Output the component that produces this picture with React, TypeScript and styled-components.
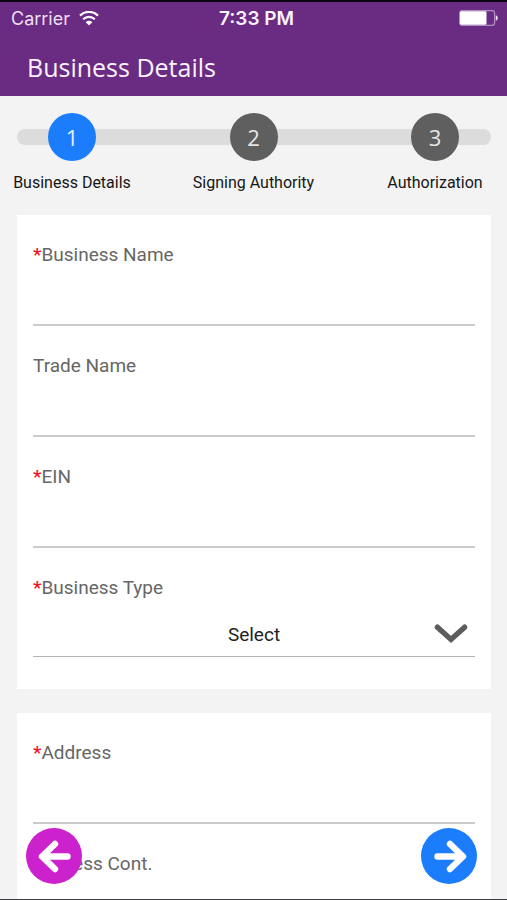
import React from "react";
import styled, { createGlobalStyle } from "styled-components";

const GlobalStyle = createGlobalStyle`
  *, *::before, *::after { box-sizing: border-box; }
  body {
    margin: 0;
    background: #f3f3f3;
    font-family: Roboto, "Liberation Sans", sans-serif;
  }
`;

const Screen = styled.div`
  position: relative;
  display: flex;
  flex-direction: column;
  height: 100vh;
  overflow: hidden;
  background: #f3f3f3;
  border-bottom: 1px solid #3c3c3e;
`;

const Header = styled.header`
  flex: none;
  background: #692c82;
  border-top: 2px solid #0b0410;
  color: #fbf2ff;
`;

const StatusBar = styled.div`
  display: grid;
  grid-template-columns: 1fr auto 1fr;
  align-items: center;
  height: 32px;
  padding: 0 9px 0 11px;
  font-family: Inter, "Liberation Sans", sans-serif;
  font-size: 18px;
`;

const Carrier = styled.span`
  display: flex;
  align-items: center;
  gap: 9px;
  color: #eedff5;
`;

const Clock = styled.time`
  padding-left: 4px;
  font-size: 19px;
  font-weight: 600;
`;

const Battery = styled.svg`
  justify-self: end;
`;

const Title = styled.h1`
  margin: 0;
  padding: 17px 27px 13px;
  font-family: "Open Sans", "Noto Sans", sans-serif;
  font-size: 25px;
  font-weight: 400;
  line-height: 32px;
`;

const Content = styled.main`
  flex: 1;
  min-height: 0;
  overflow-y: auto;
  scrollbar-width: none;
`;

const Stepper = styled.ol`
  position: relative;
  display: flex;
  justify-content: space-between;
  margin: 0;
  padding: 17px 10px 20px;
  list-style: none;

  &::before {
    content: "";
    position: absolute;
    top: 33px;
    left: 17px;
    right: 16px;
    height: 16px;
    border-radius: 8px;
    background: #dcdcdc;
  }
`;

const Step = styled.li`
  position: relative;
  display: flex;
  flex-direction: column;
  align-items: center;
  gap: 10px;
  width: 124px;
  color: #171717;
  font-size: 16px;
  line-height: 24px;
  white-space: nowrap;
`;

const StepNumber = styled.span<{ $active: boolean }>`
  display: grid;
  place-items: center;
  width: 48px;
  height: 48px;
  border-radius: 50%;
  background: ${(p) => (p.$active ? "#1b7dfb" : "#5f5f5f")};
  color: ${(p) => (p.$active ? "#e4f1ff" : "#e6e6e6")};
  font-family: "Open Sans", "Noto Sans", sans-serif;
  font-size: 22px;
`;

const Form = styled.form`
  display: grid;
  gap: 24px;
  padding: 0 16px 80px 17px;
`;

const Card = styled.section`
  display: grid;
  gap: 28px;
  padding: 28px 16px 32px;
  background: #fff;
`;

const Field = styled.div<{ $thin?: boolean }>`
  display: flex;
  flex-direction: column;
  border-bottom: ${(p) => (p.$thin ? "1px solid #b4b4b4" : "2px solid #cbcbcb")};
`;

const Label = styled.label`
  color: #666;
  font-size: 19px;
  line-height: 24px;
`;

const Required = styled.span`
  color: #f5111d;
  font-weight: 500;
`;

const TextInput = styled.input`
  width: 100%;
  height: 57px;
  padding: 12px 0 0;
  border: 0;
  outline: 0;
  background: transparent;
  color: #222;
  font: inherit;
  font-size: 19px;
`;

const SelectBox = styled.div`
  display: grid;
  align-items: center;

  & > * {
    grid-area: 1 / 1;
  }
`;

const Select = styled.select`
  appearance: none;
  width: 100%;
  height: 56px;
  padding: 12px 0 0;
  border: 0;
  outline: 0;
  background: transparent;
  color: #222;
  font: inherit;
  font-size: 19px;
  text-align: center;
  text-align-last: center;
`;

const Chevron = styled.svg`
  justify-self: end;
  margin: 12px 7px 0 0;
  pointer-events: none;
`;

const RoundButton = styled.button<{ $side: "left" | "right" }>`
  position: absolute;
  bottom: 15px;
  ${(p) => (p.$side === "left" ? "left: 26px;" : "right: 30px;")}
  display: grid;
  place-items: center;
  width: 56px;
  height: 56px;
  padding: 0;
  border: 0;
  border-radius: 50%;
  background: ${(p) => (p.$side === "left" ? "#cb22cd" : "#1b7dfb")};
  cursor: pointer;
`;

const steps = ["Business Details", "Signing Authority", "Authorization"];

type TextFieldProps = { id: string; label: string; required?: boolean };

function TextField({ id, label, required = false }: TextFieldProps) {
  return (
    <Field>
      <Label htmlFor={id}>
        {required && <Required>*</Required>}
        {label}
      </Label>
      <TextInput id={id} name={id} type="text" required={required} />
    </Field>
  );
}

function WifiIcon() {
  return (
    <svg width="20" height="15" viewBox="0 0 20 15" fill="none" stroke="#fff" strokeWidth="2.2" aria-hidden="true">
      <path d="M1 4.600a12.800 12.800 0 0 1 18 0" />
      <path d="M4.200 8.200a8.200 8.200 0 0 1 11.600 0" />
      <path d="M10 14.600 6.700 11.200a4.700 4.700 0 0 1 6.600 0z" fill="#fff" stroke="none" />
    </svg>
  );
}

function BatteryIcon() {
  return (
    <Battery width="39" height="16" viewBox="0 0 39 16" aria-hidden="true">
      <rect x="0.6" y="0.6" width="35" height="14.8" rx="2.6" fill="none" stroke="#b28fc2" strokeWidth="1.2" />
      <rect x="1" y="1.2" width="26.5" height="13.6" rx="1.4" fill="#fff" />
      <path d="M36.8 5.200c1.600.6 2 1.600 2 2.800s-.4 2.200-2 2.800z" fill="#f2e6f7" />
    </Battery>
  );
}

function ArrowIcon({ back = false }: { back?: boolean }) {
  return (
    <svg width="56" height="56" viewBox="0 0 56 56" fill="none" stroke="#fff" strokeWidth="6.4" strokeLinecap="round" strokeLinejoin="round" aria-hidden="true">
      {back ? (
        <>
          <path d="M41.500 28.500H18M29 16 16 28.500 29 41" />
          <path d="M24 23 18 28.500 24 34z" fill="#fff" stroke="none" />
        </>
      ) : (
        <>
          <path d="M16.500 28.500H40M29 16 42 28.500 29 41" />
          <path d="M34 23 40 28.500 34 34z" fill="#fff" stroke="none" />
        </>
      )}
    </svg>
  );
}

export default function App() {
  return (
    <>
      <GlobalStyle />
      <Screen>
        <Header>
          <StatusBar>
            <Carrier>
              Carrier
              <WifiIcon />
            </Carrier>
            <Clock>7:33 PM</Clock>
            <BatteryIcon />
          </StatusBar>
          <Title>Business Details</Title>
        </Header>
        <Content>
          <Stepper>
            {steps.map((name, i) => (
              <Step key={name} aria-current={i === 0 ? "step" : undefined}>
                <StepNumber $active={i === 0}>{i + 1}</StepNumber>
                {name}
              </Step>
            ))}
          </Stepper>
          <Form id="business-form">
            <Card>
              <TextField id="businessName" label="Business Name" required />
              <TextField id="tradeName" label="Trade Name" />
              <TextField id="ein" label="EIN" required />
              <Field $thin>
                <Label htmlFor="businessType">
                  <Required>*</Required>Business Type
                </Label>
                <SelectBox>
                  <Select id="businessType" name="businessType" defaultValue="">
                    <option value="">Select</option>
                  </Select>
                  <Chevron width="34" height="20" viewBox="0 0 34 20" fill="none" stroke="#5c5c5c" strokeWidth="5.4" strokeLinecap="round" aria-hidden="true">
                    <path d="M3.400 3.200 17 15.400 30.600 3.200" />
                  </Chevron>
                </SelectBox>
              </Field>
            </Card>
            <Card>
              <TextField id="address" label="Address" required />
              <TextField id="addressCont" label="Address Cont." />
            </Card>
          </Form>
        </Content>
        <RoundButton type="button" $side="left" aria-label="Back">
          <ArrowIcon back />
        </RoundButton>
        <RoundButton type="submit" form="business-form" $side="right" aria-label="Next">
          <ArrowIcon />
        </RoundButton>
      </Screen>
    </>
  );
}
